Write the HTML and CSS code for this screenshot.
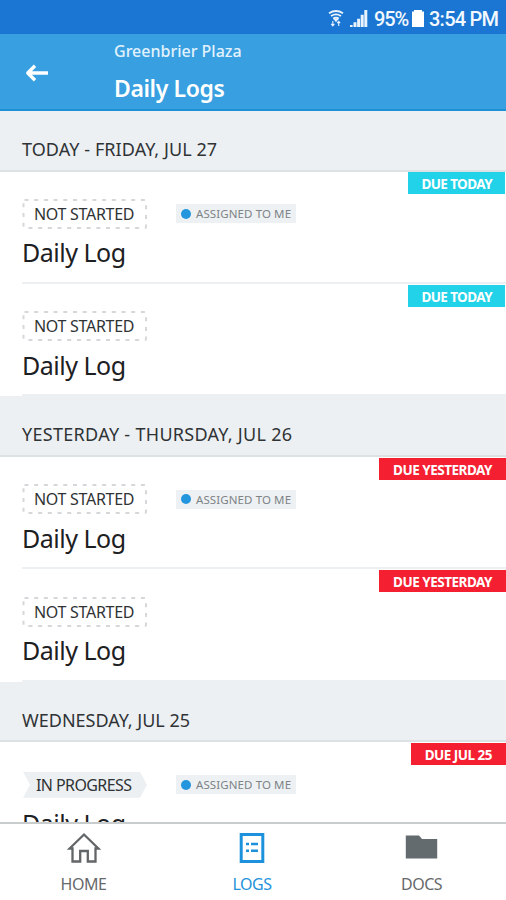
FILE: index.html
```html
<!DOCTYPE html>
<html lang="en">
<head>
<meta charset="utf-8">
<title>Daily Logs</title>
<link rel="stylesheet" href="styles.css">
</head>
<body>
<div class="app">
  <div class="status">
    <svg class="wifi" width="16" height="18" viewBox="0 0 16 18" fill="none" stroke="#e8f3fd">
      <path d="M1 3.2Q8 -1.2 15 3.2M3 6Q8 2.8 13 6M5.2 8.6Q8 6.8 10.8 8.6" stroke-width="1.9"/>
      <path d="M6.6 9.6h2.8L8 11.4zM4.8 11v4.5M3.2 13.8l1.6 2 1.6-2M10.7 16v-4M9.2 13.2l1.5-1.8 1.5 1.8" stroke-width="1.1"/>
    </svg>
    <svg class="signal" width="19" height="18" viewBox="0 0 19 18" fill="#e8f3fd">
      <path d="M1 15h2.6v2H1zM4.5 12.3h3V17h-3zM8.1 8.8h3V17h-3zM11.7 4.8h3V17h-3zM15.3 0h3v17h-3z"/>
    </svg>
    <span class="percent">95%</span>
    <svg class="battery" width="12" height="17" viewBox="0 0 12 17" fill="#fff"><path d="M2 0h8v1.5h2V17H0V1.5h2z"/></svg>
    <span class="clock">3:54 PM</span>
  </div>
  <header class="bar">
    <svg class="back" width="24" height="18" viewBox="0 0 24 18" fill="none" stroke="#fff" stroke-width="3.4"><path d="M23 9H3M10 1.8L2.8 9l7.2 7.2" stroke-linejoin="round"/></svg>
    <div class="titles">
      <div class="project">Greenbrier Plaza</div>
      <h1>Daily Logs</h1>
    </div>
  </header>
  <main class="list">
    <h2 class="s1">TODAY - FRIDAY, JUL 27</h2>
    <article>
      <span class="due today">DUE TODAY</span>
      <div class="meta"><svg class="outline" width="125" height="30"><rect x="1.5" y="1" width="122.5" height="28" rx="1"/></svg><span class="state">NOT STARTED</span><span class="mine"><i></i>ASSIGNED TO ME</span></div>
      <h3>Daily Log</h3>
    </article>
    <article>
      <span class="due today">DUE TODAY</span>
      <div class="meta"><svg class="outline" width="125" height="30"><rect x="1.5" y="1" width="122.5" height="28" rx="1"/></svg><span class="state">NOT STARTED</span></div>
      <h3>Daily Log</h3>
    </article>
    <h2 class="s2">YESTERDAY - THURSDAY, JUL 26</h2>
    <article>
      <span class="due late">DUE YESTERDAY</span>
      <div class="meta"><svg class="outline" width="125" height="30"><rect x="1.5" y="1" width="122.5" height="28" rx="1"/></svg><span class="state">NOT STARTED</span><span class="mine"><i></i>ASSIGNED TO ME</span></div>
      <h3>Daily Log</h3>
    </article>
    <article>
      <span class="due late">DUE YESTERDAY</span>
      <div class="meta"><svg class="outline" width="125" height="30"><rect x="1.5" y="1" width="122.5" height="28" rx="1"/></svg><span class="state">NOT STARTED</span></div>
      <h3>Daily Log</h3>
    </article>
    <h2 class="s3">WEDNESDAY, JUL 25</h2>
    <article>
      <span class="due late dated">DUE JUL 25</span>
      <div class="meta"><span class="state progress">IN PROGRESS</span><span class="mine"><i></i>ASSIGNED TO ME</span></div>
      <h3>Daily Log</h3>
    </article>
  </main>
  <nav>
    <a class="home">
      <svg width="34" height="32" viewBox="0 0 34 32" fill="none" stroke="#626668" stroke-width="2.3"><path d="M2.6 16.5L17 2.5 31.4 16.5H28.5V29.5H20.8V19H13.2V29.5H5.5V16.5z"/></svg>
      <span>HOME</span>
    </a>
    <a class="logs">
      <svg width="34" height="32" viewBox="0 0 34 32" fill="none" stroke="#1d91dc"><path d="M6.2 2.5h21.6v27H6.2z" stroke-width="3"/><path d="M11 12h3M16 12h7M11 18.8h3M16 18.8h7" stroke-width="2.4"/></svg>
      <span>LOGS</span>
    </a>
    <a class="docs">
      <svg width="34" height="32" viewBox="0 0 34 32" fill="#646b6e"><path d="M.8 3.5h13.2l3 3.5h15.2V26.5H.8z"/></svg>
      <span>DOCS</span>
    </a>
  </nav>
</div>
</body>
</html>
```
FILE: styles.css
```css
* { box-sizing: border-box; }
body { margin: 0; font-family: "Noto Sans", sans-serif; color: #303335; }
h1, h2, h3 { margin: 0; font-weight: 400; white-space: nowrap; }
.app { width: 506px; height: 900px; display: flex; flex-direction: column; overflow: hidden; background: #fff; }
.status { height: 34px; flex: none; background: #1a76d2; color: #f2f8fe; display: flex; align-items: center; justify-content: flex-end; padding: 3px 8px 0 0; font: 500 20px/30px Roboto, sans-serif; white-space: nowrap; }
.wifi { margin-right: 5px; }
.signal { margin-right: 6px; }
.percent { width: 35px; margin-right: 3px; letter-spacing: -1.1px; }
.battery { margin-right: 5px; }
.clock { width: 69px; letter-spacing: -.75px; }
.bar { height: 77px; flex: none; background: #389fe0; border-bottom: 2px solid #1c91d5; display: flex; color: #fff; padding-left: 25px; }
.back { margin: 30px 65px 0 0; }
.project { font-size: 16px; line-height: 20px; margin-top: 7px; letter-spacing: 0; color: #e2f2fd; font-weight: 500; white-space: nowrap; }
h1 { font-size: 23px; line-height: 28px; margin-top: 13px; font-weight: 600; letter-spacing: -.4px; }
.list { flex: 1; min-height: 0; overflow: hidden; }
h2 { height: 60.6px; background: #ecf0f3; border-bottom: 2px solid #dce1e3; padding: 26px 0 0 22px; font-size: 18px; line-height: 24px; }
.s1 { letter-spacing: .08px; }
.s2 { letter-spacing: .3px; }
.s3 { letter-spacing: 0; }
article { height: 112.4px; position: relative; padding: 27.4px 0 0 22px; }
article::after { content: ""; position: absolute; left: 22px; right: 0; bottom: 0; height: 2px; background: #ecf0f2; }
.due { position: absolute; right: 1px; top: .6px; width: 97px; height: 22px; padding-right: 13px; text-align: right; color: #fff; font-size: 13.5px; line-height: 24px; font-weight: 700; letter-spacing: -.6px; white-space: nowrap; }
.today { background: #22d2e8; }
.late { background: #f51f32; width: 127px; right: 0; padding-right: 14px; letter-spacing: -.5px; }
.dated { width: 95px; }
.meta { display: flex; align-items: center; height: 30px; position: relative; }
.outline { position: absolute; left: 0; top: 0; fill: none; stroke: #d5d8da; stroke-width: 2; stroke-dasharray: 4 5.7; }
.state { width: 125px; height: 26px; padding-left: 12px; font-size: 16px; line-height: 26px; letter-spacing: -.3px; white-space: nowrap; }
.progress { background: #ecf0f2; clip-path: polygon(1px 0, 118px 0, 125px 50%, 118px 100%, 1px 100%, 8px 50%); padding-left: 14px; letter-spacing: -.6px; }
.mine { margin-left: 29px; width: 120px; height: 19px; background: #eef1f3; display: flex; align-items: center; padding-left: 5px; color: #7d8387; font-size: 11.5px; line-height: 19px; letter-spacing: .1px; white-space: nowrap; }
.mine i { width: 10px; height: 10px; border-radius: 50%; background: #2496dd; margin-right: 5px; flex: none; }
h3 { font-size: 25px; line-height: 34px; margin-top: 6.4px; letter-spacing: -.5px; color: #1d2022; }
nav { height: 78px; flex: none; border-top: 2px solid #c9cccd; background: #fff; display: grid; grid-template-columns: 167px 170px 169px; }
nav a { display: flex; flex-direction: column; align-items: center; padding-top: 8px; font-size: 16px; line-height: 22px; color: #66696b; letter-spacing: -.5px; }
nav span { margin-top: 9px; }
.logs { color: #2492da; }
```
